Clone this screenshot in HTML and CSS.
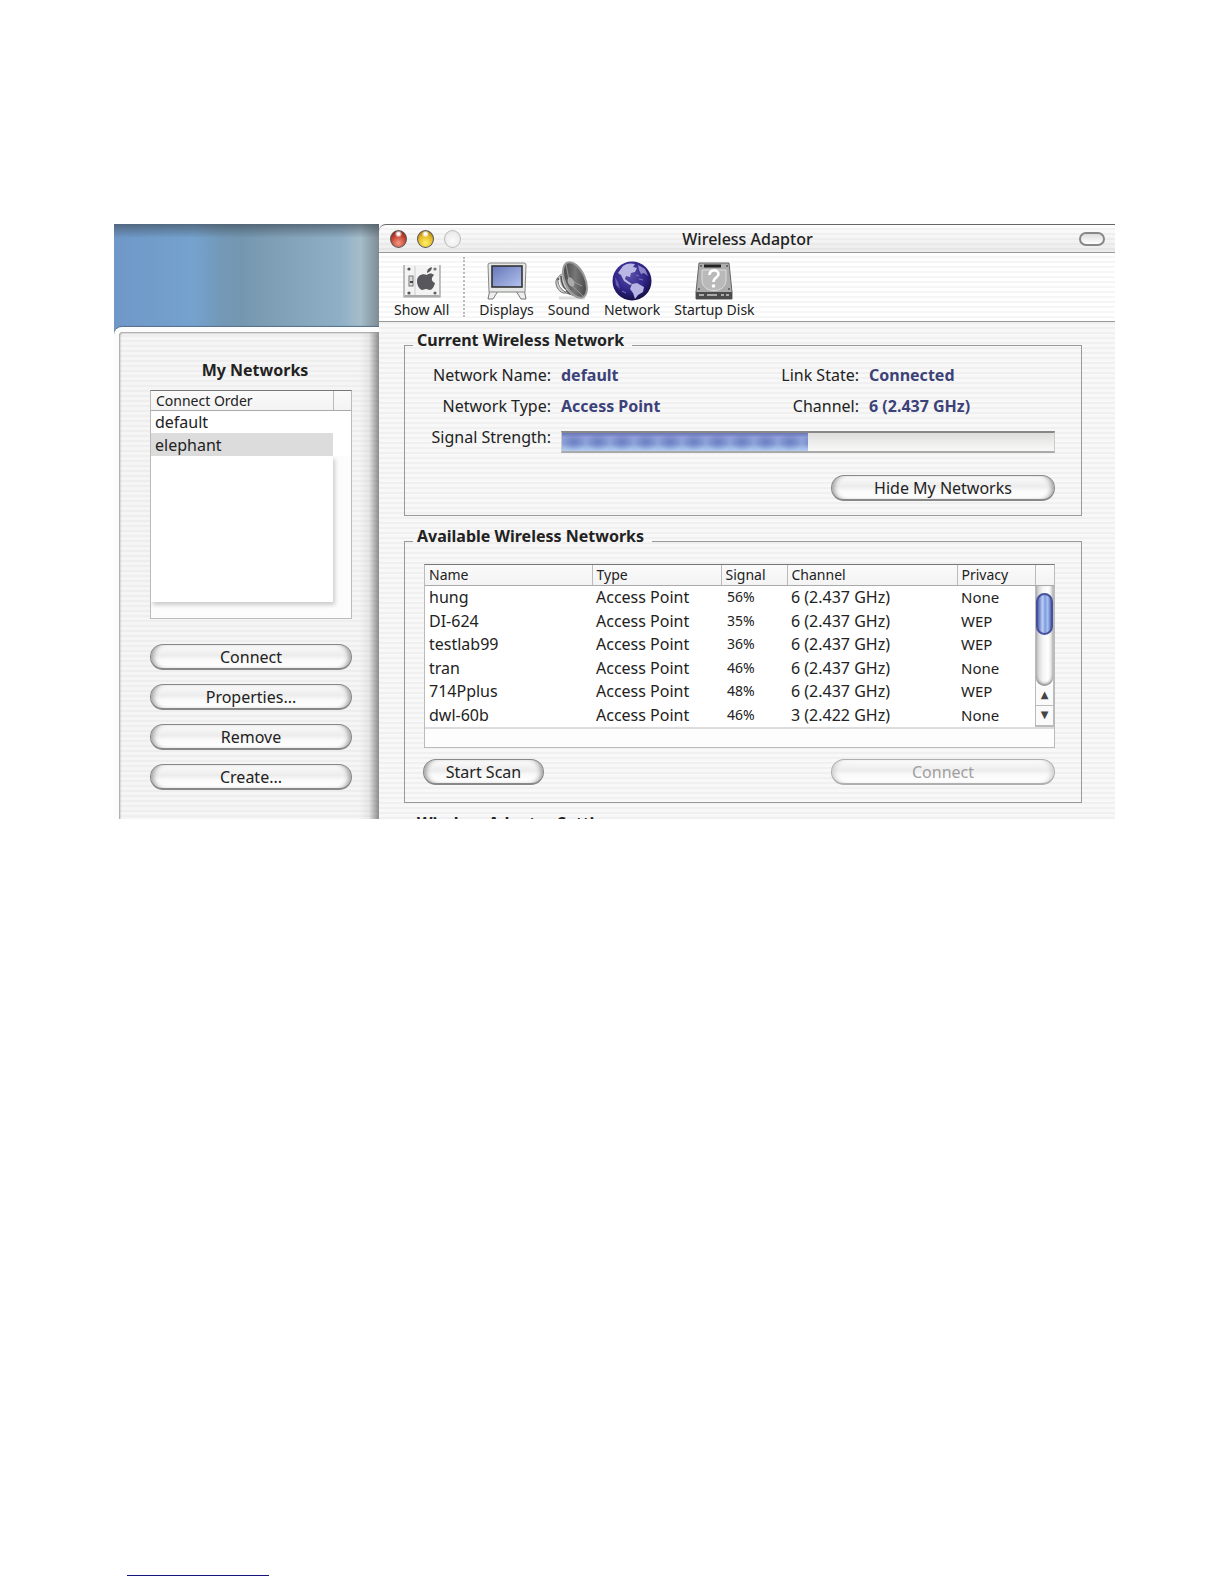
FILE: index.html
```html
<!DOCTYPE html>
<html lang="en">
<head>
  <meta charset="UTF-8">
  <title>Wireless Adaptor</title>
  <link rel="stylesheet" href="styles.css">
</head>
<body>
  <main class="screen">
    <aside class="desktop">
      <div class="drawer">
        <h2>My Networks</h2>
        <div class="order-list">
          <table>
            <thead>
              <tr><th>Connect Order</th><th class="corner"></th></tr>
            </thead>
            <tbody>
              <tr><td>default</td></tr>
              <tr class="selected"><td>elephant</td></tr>
            </tbody>
          </table>
          <div class="order-space"></div>
        </div>
        <div class="drawer-buttons">
          <button type="button">Connect</button>
          <button type="button">Properties...</button>
          <button type="button">Remove</button>
          <button type="button">Create...</button>
        </div>
      </div>
    </aside>

    <div class="window">
      <header class="titlebar">
        <div class="lights">
          <span class="light red"></span>
          <span class="light yellow"></span>
          <span class="light clear"></span>
        </div>
        <h1>Wireless Adaptor</h1>
        <span class="pill"></span>
      </header>

      <nav class="toolbar">
        <a class="tool" href="#">
          <svg width="40" height="40" viewBox="0 0 40 40">
            <rect x="2" y="4" width="36" height="32" fill="#f3f3f3"/>
            <path d="M2 4v32h36V4" fill="none" stroke="#999" stroke-width="1.2"/>
            <path d="M13 5v30" stroke="#ccc"/>
            <path d="M3 35h34" stroke="#aaa" stroke-width="2"/>
            <circle cx="7" cy="8" r="1.600" fill="#555"/><circle cx="33" cy="8" r="1.600" fill="#777"/>
            <circle cx="7" cy="32" r="1.600" fill="#555"/><circle cx="33" cy="32" r="1.600" fill="#666"/>
            <rect x="7" y="15" width="4" height="10" fill="#ddd" stroke="#777"/>
            <path d="M8 21h3" stroke="#444" stroke-width="2"/>
            <path d="M25 14c2-2 5-2 7 0c-3 3-3 6 1 8c-1 4-3 7-5 7c-2 0-2-1-4-1s-2 1-4 1c-3-1-5-5-5-9c0-5 5-8 10-6z" fill="#58585c"/>
            <path d="M25 12c0-4 2-5 5-6c0 3-2 5-5 6z" fill="#58585c"/>
          </svg>
          Show All
        </a>
        <span class="divider"></span>
        <a class="tool" href="#">
          <svg width="40" height="40" viewBox="0 0 40 40">
            <defs>
              <linearGradient id="lcd" x1="0" y1="0" x2="1" y2="1">
                <stop offset="0" stop-color="#6676b8"/><stop offset="1" stop-color="#b4c3ef"/>
              </linearGradient>
            </defs>
            <path d="M3 28L1 38h5l5-8h18l5 8h5l-2-10z" fill="#eee" stroke="#777"/>
            <path d="M3 2h34q2 0 2 2l-1 27H2L1 4q0-2 2-2z" fill="#e6e8e5" stroke="#888"/>
            <rect x="5" y="5" width="30" height="21" fill="url(#lcd)" stroke="#333" stroke-width="1.6"/>
          </svg>
          Displays
        </a>
        <a class="tool" href="#">
          <svg width="40" height="40" viewBox="0 0 40 40">
            <defs>
              <linearGradient id="cone" x1="0" y1="0" x2="1" y2="1">
                <stop offset="0" stop-color="#333"/><stop offset=".5" stop-color="#777"/><stop offset="1" stop-color="#333"/>
              </linearGradient>
            </defs>
            <path d="M10 37h26" stroke="#ddd" stroke-width="3"/>
            <path d="M14 12c-4 3-8 6-7 11c1 6 6 10 10 9l12 4z" fill="#ccc" stroke="#777"/>
            <path d="M9 17c0 7 4 12 8 14M12 15c0 8 4 14 9 18" fill="none" stroke="#555" stroke-width="1.6"/>
            <path d="M10 19c0 6 3 9 7 11" fill="none" stroke="#fff" stroke-width="1.4"/>
            <ellipse cx="26" cy="19" rx="10" ry="19" transform="rotate(-24 26 19)" fill="url(#cone)" stroke="#999" stroke-width="2"/>
            <path d="M20 19L17 3M22 24l12 11M23 20l10 5" stroke="#999" stroke-width="1"/>
            <ellipse cx="22" cy="21" rx="3" ry="5" transform="rotate(-24 22 21)" fill="#aaa"/>
          </svg>
          Sound
        </a>
        <a class="tool" href="#">
          <svg width="40" height="40" viewBox="0 0 40 40">
            <defs>
              <radialGradient id="sea" cx=".45" cy=".35" r=".65">
                <stop offset="0" stop-color="#5a50a8"/><stop offset=".6" stop-color="#31268a"/><stop offset="1" stop-color="#150f45"/>
              </radialGradient>
            </defs>
            <circle cx="20" cy="20" r="19.500" fill="url(#sea)"/>
            <path d="M11 5c4-3 8-3 12-2l-2 3l4 1l-2 4l-4 1l-1 4l-4-1l-1 3l4 3l3 2l-2 1l-6-4l-3-6l-3-2z" fill="#b9b8e4"/>
            <path d="M26 4l7 4l3 7l-4-3l-3 1l-2-4z" fill="#8c87c8"/>
            <path d="M20 23l5-1l7 4l-1 5l-5 3l-3 4l-2-6l-3-4z" fill="#b5b4e2"/>
            <path d="M3 16l3 5l2 7l-4-4z" fill="#675db0"/>
            <path d="M24 14l3 1M27 18l4 1M10 30l4 2" stroke="#7a72bd"/>
          </svg>
          Network
        </a>
        <a class="tool" href="#">
          <svg width="40" height="40" viewBox="0 0 40 40">
            <path d="M5 2h30l3 29v7H2v-7z" fill="#adadad" stroke="#666"/>
            <path d="M2 31h36v7H2z" fill="#4c4c4c"/>
            <path d="M5 34h5M13 34h10M27 34h3M32 34h3" stroke="#aaa" stroke-width="2"/>
            <path d="M10 5h17" stroke="#222" stroke-width="3"/>
            <path d="M8 9h24v10c0 14-24 14-24 0z" fill="#b9b9b9" stroke="#dedede"/>
            <path d="M15.500 14c0-6 9-6 9-1c0 4-5 3-5 8" fill="none" stroke="#fff" stroke-width="2.600"/>
            <circle cx="19.500" cy="25" r="1.800" fill="#fff"/>
            <circle cx="7" cy="5" r="1" fill="#555"/><circle cx="33" cy="5" r="1" fill="#555"/>
            <circle cx="5" cy="28" r="1" fill="#555"/><circle cx="35" cy="28" r="1" fill="#555"/>
          </svg>
          Startup Disk
        </a>
      </nav>

      <div class="content">
        <fieldset>
          <legend>Current Wireless Network</legend>
          <dl class="status">
            <dt>Network Name:</dt><dd>default</dd>
            <dt>Link State:</dt><dd>Connected</dd>
            <dt>Network Type:</dt><dd>Access Point</dd>
            <dt>Channel:</dt><dd>6 (2.437 GHz)</dd>
            <dt>Signal Strength:</dt>
            <dd class="meter-cell">
              <div class="meter"><div class="meter-fill" style="width: 50%"></div></div>
            </dd>
          </dl>
          <div class="actions end">
            <button type="button" class="wide">Hide My Networks</button>
          </div>
        </fieldset>

        <fieldset>
          <legend>Available Wireless Networks</legend>
          <div class="networks">
            <table>
              <colgroup>
                <col class="col-name"><col class="col-type"><col class="col-signal">
                <col class="col-channel"><col class="col-privacy"><col class="col-scroll">
              </colgroup>
              <thead>
                <tr><th>Name</th><th>Type</th><th>Signal</th><th>Channel</th><th>Privacy</th><th></th></tr>
              </thead>
              <tbody>
                <tr>
                  <td>hung</td><td>Access Point</td><td class="percent">56%</td><td>6 (2.437 GHz)</td><td class="privacy">None</td>
                  <td class="scroll-cell" rowspan="6">
                    <div class="scrollbar">
                      <div class="track"><div class="thumb"></div></div>
                      <button type="button" class="arrow">▲</button>
                      <button type="button" class="arrow">▼</button>
                    </div>
                  </td>
                </tr>
                <tr><td>DI-624</td><td>Access Point</td><td class="percent">35%</td><td>6 (2.437 GHz)</td><td class="privacy">WEP</td></tr>
                <tr><td>testlab99</td><td>Access Point</td><td class="percent">36%</td><td>6 (2.437 GHz)</td><td class="privacy">WEP</td></tr>
                <tr><td>tran</td><td>Access Point</td><td class="percent">46%</td><td>6 (2.437 GHz)</td><td class="privacy">None</td></tr>
                <tr><td>714Pplus</td><td>Access Point</td><td class="percent">48%</td><td>6 (2.437 GHz)</td><td class="privacy">WEP</td></tr>
                <tr><td>dwl-60b</td><td>Access Point</td><td class="percent">46%</td><td>3 (2.422 GHz)</td><td class="privacy">None</td></tr>
              </tbody>
            </table>
          </div>
          <div class="actions">
            <button type="button" class="scan">Start Scan</button>
            <button type="button" class="wide" disabled>Connect</button>
          </div>
        </fieldset>

        <fieldset>
          <legend>Wireless Adaptor Settings</legend>
        </fieldset>
      </div>
    </div>
  </main>

  <footer class="page-footer"></footer>
</body>
</html>
```

FILE: styles.css
```css
* {
  box-sizing: border-box;
}
body {
  display: flex;
  flex-direction: column;
  min-height: 100vh;
  margin: 0;
  padding: 224px 109px 8px 114px;
  background: #fff;
  color: #222;
  font-family: "Lucida Grande", "Noto Sans", sans-serif;
  font-size: 16px;
}
h1, h2, dl, dd {
  margin: 0;
}
table {
  width: 100%;
  border-collapse: collapse;
  table-layout: fixed;
}
th, td {
  padding: 0;
  text-align: left;
  white-space: nowrap;
}

/* the visible part of the desktop, cut off at the bottom */
.screen {
  display: grid;
  grid-template-columns: 265px 1fr;
  height: 595px;
  overflow: hidden;
}
.desktop {
  display: flex;
  flex-direction: column;
  padding-top: 103px;
  background:
    linear-gradient(to bottom, rgba(60, 70, 80, 0.6), rgba(60, 70, 80, 0) 14px),
    linear-gradient(to right, #6f98c8, #75a2ce 30%, #7399b8 40%, #7497b0 48%, #7f9fb6 60%, #8eafc6 85%, #a5bdca 93%, #7d8c94);
}
.drawer {
  flex: 1;
  padding: 27px 27px 0 31px;
  border: solid #fcfcfc;
  border-width: 5px 0 0 5px;
  border-radius: 8px 0 0 0;
  background:
    linear-gradient(to left, rgba(70, 70, 70, 0.6), rgba(120, 120, 120, 0.12) 10px, rgba(120, 120, 120, 0) 20px),
    repeating-linear-gradient(to bottom, #f5f5f5 0 3px, #eeeeee 3px 5px);
  box-shadow: inset 1px 1px 2px #999, 0 -1px 1px #56708a;
}
.drawer h2 {
  height: 31px;
  font-size: 16px;
  line-height: 22px;
  text-align: center;
  padding-left: 8px;
}
.order-list {
  height: 229px;
  border: 1px solid #bbb;
  border-top-color: #777;
  background: #fcfcfc;
}
.order-list table, .networks table {
  background: #fff;
}
.order-list th, .networks th {
  height: 19px;
  border-right: 1px solid #bbb;
  border-bottom: 1px solid #aaa;
  background: linear-gradient(#fafafa, #f3f3f3);
  font-size: 14px;
  font-weight: normal;
  line-height: 17px;
  padding-left: 5px;
}
.order-list th.corner {
  width: 18px;
  border-right: 0;
}
.order-list td {
  height: 23px;
  padding-left: 4px;
  line-height: 22px;
}
.order-list .selected td {
  background: #dcdcdc;
}
.order-space {
  height: 146px;
  margin-right: 18px;
  background: #fff;
  box-shadow: 2px 3px 4px #ccc;
}
.drawer-buttons {
  display: flex;
  flex-direction: column;
  gap: 14px;
  padding-top: 25px;
}

button {
  height: 26px;
  padding: 0;
  border: 1px solid #888;
  border-bottom-width: 2px;
  border-radius: 13px;
  background: linear-gradient(#fcfcfc, #ececec 45%, #fafafa 65%, #fff);
  box-shadow: inset 5px 0 5px -3px #999, inset -5px 0 5px -3px #999;
  color: #222;
  font: 16px/20px "Lucida Grande", "Noto Sans", sans-serif;
}
button:disabled {
  border-color: #b0b0b0;
  box-shadow: inset 5px 0 5px -3px #ccc, inset -5px 0 5px -3px #ccc;
  color: #a0a0a0;
}

.window {
  background: repeating-linear-gradient(to bottom, #f8f8f8 0 3px, #f0f0f0 3px 5px);
}
.titlebar {
  display: grid;
  grid-template-columns: 1fr auto 1fr;
  align-items: center;
  height: 29px;
  padding: 0 10px 0 11px;
  border-top: 1px solid #666;
  border-bottom: 1px solid #999;
  border-radius: 7px 0 0 0;
  background:
    linear-gradient(rgba(255, 255, 255, 0.4), rgba(210, 210, 210, 0.4)),
    repeating-linear-gradient(to bottom, #fdfdfd 0 3px, #f0f0f0 3px 5px);
}
.titlebar h1 {
  font-size: 16px;
  font-weight: 500;
  line-height: 22px;
}
.lights {
  display: flex;
  gap: 10px;
}
.light {
  width: 17px;
  height: 18px;
  border: 1px solid #555;
  border-radius: 50%;
}
.red {
  background: radial-gradient(circle at 50% 18%, #fff 0 8%, transparent 25%), radial-gradient(circle at 50% 75%, #f59a84, #c2402f 55%, #6d1a14);
}
.yellow {
  background: radial-gradient(circle at 50% 18%, #fff 0 8%, transparent 25%), radial-gradient(circle at 50% 75%, #fff36b, #e3b423 55%, #8a610b);
}
.clear {
  border-color: #bbb;
  background: radial-gradient(circle at 50% 60%, #fafafa, #e4e4e4);
}
.pill {
  justify-self: end;
  width: 26px;
  height: 14px;
  border: 2px solid #888;
  border-radius: 7px;
  background: linear-gradient(#ddd, #fff);
}

.toolbar {
  display: flex;
  gap: 14px;
  height: 69px;
  padding: 4px 15px 0;
  border-bottom: 1px solid #999;
  background: repeating-linear-gradient(to bottom, #fff 0 3px, #f6f6f6 3px 5px);
}
.tool {
  display: flex;
  flex-direction: column;
  align-items: center;
  padding-top: 4px;
  color: #222;
  font-size: 14px;
  line-height: 18px;
  text-decoration: none;
}
.divider {
  height: 60px;
  border-left: 2px dotted #bbb;
}

.content {
  padding: 8px 33px 0 25px;
}
fieldset {
  min-width: 0;
  margin: 0 0 10px;
  padding: 0 26px 14px 0;
  border: 1px solid #999;
}
/* the bottom padding lifts the text above the group line */
legend {
  margin-left: 8px;
  padding: 0 8px 10px 4px;
  font-weight: bold;
  line-height: 20px;
}
.status {
  display: grid;
  grid-template-columns: 146px 1fr auto 186px;
  grid-auto-rows: 31px;
  column-gap: 10px;
  line-height: 30px;
}
dt {
  text-align: right;
}
dd {
  color: #3c4278;
  font-weight: bold;
}
.meter-cell {
  display: flex;
  grid-column: 2 / -1;
  align-items: flex-end;
}
.meter {
  flex: 1;
  height: 22px;
  border: 1px solid #ccc;
  border-top: 2px solid #888;
  border-bottom: 2px solid #aaa;
  background: linear-gradient(#dedede, #ececea 50%, #f8f8f6);
}
.meter-fill {
  height: 100%;
  background:
    radial-gradient(ellipse at center, rgba(75, 95, 170, 0.5), rgba(75, 95, 170, 0) 70%) 0 0 / 24px 18px,
    linear-gradient(#6a75b8, #909fd8 25%, #8ba2da 60%, #b3cdf0);
}
.actions {
  display: flex;
  justify-content: space-between;
  padding: 11px 0 3px 18px;
}
.actions.end {
  justify-content: flex-end;
  padding: 22px 0 0;
}
.wide {
  width: 224px;
}
.scan {
  width: 121px;
}

.networks {
  height: 184px;
  margin: 8px 0 0 19px;
  border: 1px solid #bbb;
  border-top-color: #777;
  background: #fdfdfd;
}
.networks table {
  height: 163px;
  border-bottom: 2px solid #ddd;
}
.networks th {
  height: 20px;
  padding-left: 4px;
}
.networks th:last-child {
  border-right: 0;
}
.networks td {
  padding-left: 4px;
  line-height: 22px;
}
.networks .percent {
  padding-left: 6px;
  font-size: 14px;
}
.networks .privacy {
  font-size: 15px;
}
.col-name { width: 167px; }
.col-type { width: 129px; }
.col-signal { width: 66px; }
.col-privacy { width: 78px; }
.col-scroll { width: 19px; }
.networks .scroll-cell {
  height: 141px;
  padding: 0;
}
.scrollbar {
  display: flex;
  flex-direction: column;
  height: 141px;
  border: 1px solid #bbb;
  border-top: 0;
}
.track {
  flex: 1;
  padding-top: 7px;
  border-radius: 0 0 9px 9px;
  background: linear-gradient(to right, #c8c8c8, #f4f4f4 40%, #fff 70%, #ddd);
  box-shadow: inset 0 -2px 3px #888;
}
.thumb {
  height: 42px;
  border: 2px solid #46509c;
  border-radius: 9px;
  background: linear-gradient(to right, #5a6ab4, #b9cdf5 35%, #7f9be0 55%, #a8c2f2 75%, #5566b0);
}
.arrow {
  height: 20px;
  border: 0;
  border-bottom: 1px solid #bbb;
  border-radius: 0;
  background: #fafafa;
  box-shadow: none;
  color: #444;
  font: 10px/18px "DejaVu Sans", sans-serif;
}

.page-footer {
  width: 142px;
  margin: auto 0 0 13px;
  border-bottom: 1px solid #14147c;
}
```
